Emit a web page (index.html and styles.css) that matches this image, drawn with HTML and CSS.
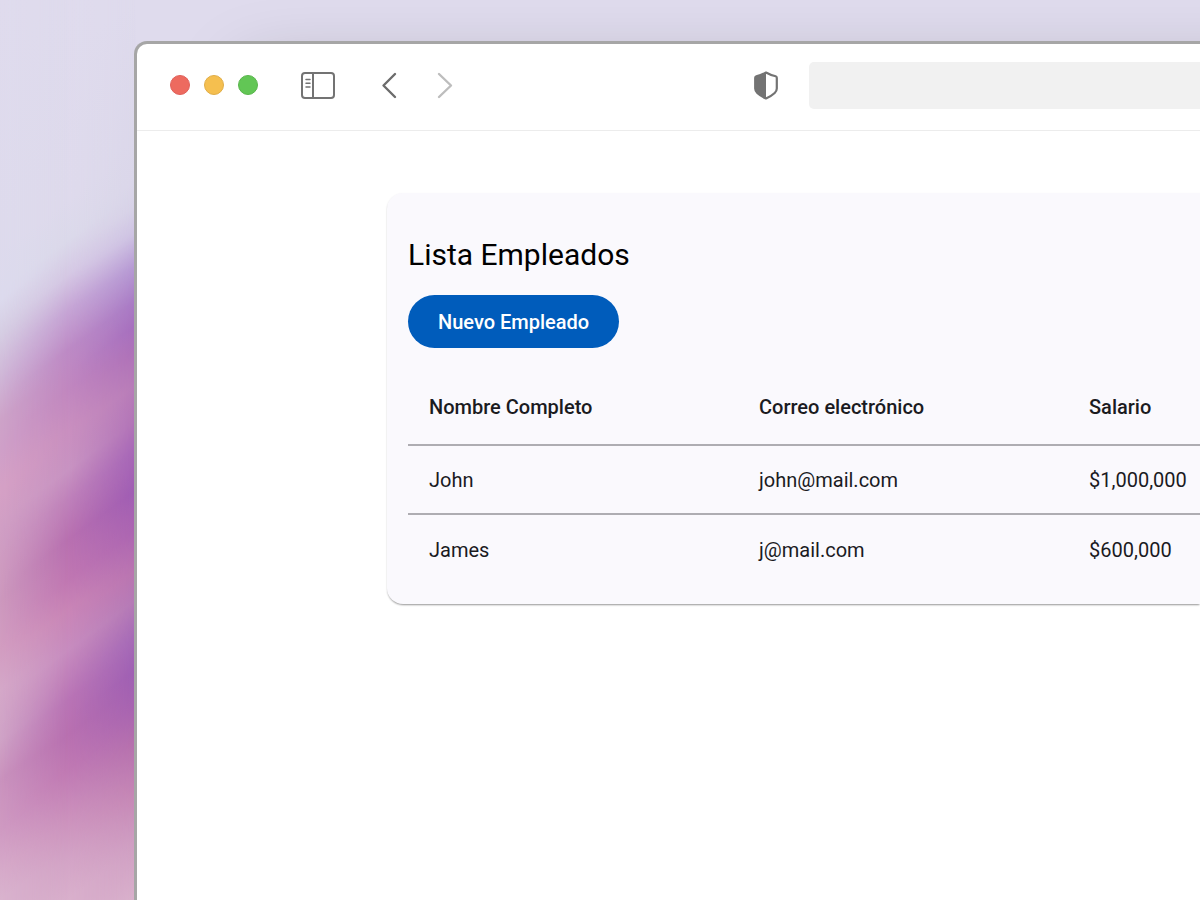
FILE: index.html
```html
<!DOCTYPE html>
<html lang="es">
<head>
<meta charset="utf-8">
<meta name="viewport" content="width=device-width, initial-scale=1">
<title>Lista Empleados</title>
<link rel="stylesheet" href="styles.css">
</head>
<body>
<div class="wallpaper" aria-hidden="true">
  <div class="wash wash-right"></div>
  <div class="wash wash-middle"></div>
  <div class="wash wash-left"></div>
</div>
<div class="window">
  <header class="toolbar">
    <div class="nav">
      <div class="lights">
        <span class="light red"></span>
        <span class="light yellow"></span>
        <span class="light green"></span>
      </div>
      <button class="icon-button" type="button" aria-label="Barra lateral">
        <svg width="34" height="27" viewBox="0 0 34 27" fill="none" stroke="#737373" stroke-width="2">
          <rect x="1" y="1" width="32" height="25" rx="3"/>
          <path d="M12 1v25"/>
          <path d="M5 7.500h4M5 11.200h4M5 14.900h4" stroke-width="1.500" stroke-linecap="round"/>
        </svg>
      </button>
      <div class="arrows">
        <button class="icon-button" type="button" aria-label="Atrás">
          <svg width="16" height="27" viewBox="0 0 16 27" fill="none" stroke="#6c6c6c" stroke-width="2.400" stroke-linecap="round" stroke-linejoin="round"><path d="M14 2L2.500 13.500L14 25"/></svg>
        </button>
        <button class="icon-button" type="button" aria-label="Adelante">
          <svg width="16" height="27" viewBox="0 0 16 27" fill="none" stroke="#bdbdbd" stroke-width="2.400" stroke-linecap="round" stroke-linejoin="round"><path d="M2 2L14 13.500L2 25"/></svg>
        </button>
      </div>
    </div>
    <div class="location">
      <svg width="24" height="29" viewBox="0 0 24 29">
        <path d="M12 1.500C8.500 3.500 5 4.700 2.300 5.300Q1.200 5.600 1.200 6.800V17.500Q1.200 20 3.300 22C6 24.500 9 26.200 12 27.500C15 26.200 18 24.500 20.700 22Q22.800 20 22.800 17.500V6.800Q22.800 5.600 21.700 5.300C19 4.700 15.500 3.500 12 1.500Z" fill="#fff" stroke="#737373" stroke-width="2.200" stroke-linejoin="round"/>
        <path d="M12 1.500C8.500 3.500 5 4.700 2.300 5.300Q1.200 5.600 1.200 6.800V17.500Q1.200 20 3.300 22C6 24.500 9 26.200 12 27.500Z" fill="#737373"/>
      </svg>
      <input class="address" type="text" aria-label="Dirección">
    </div>
  </header>
  <main class="page">
    <section class="card">
      <h1 class="title">Lista Empleados</h1>
      <button class="primary" type="button">Nuevo Empleado</button>
      <table class="employees">
        <thead>
          <tr><th class="name" scope="col">Nombre Completo</th><th class="mail" scope="col">Correo electrónico</th><th scope="col">Salario</th></tr>
        </thead>
        <tbody>
          <tr><td>John</td><td>john@mail.com</td><td>$1,000,000</td></tr>
          <tr><td>James</td><td>j@mail.com</td><td>$600,000</td></tr>
        </tbody>
      </table>
    </section>
  </main>
</div>
</body>
</html>
```

FILE: styles.css
```css
* {
  box-sizing: border-box;
}

body {
  margin: 0;
  min-height: 100vh;
  display: flex;
  padding: 41px 0 0 134px;
  background: #dfdbed;
  font-family: Roboto, "Liberation Sans", sans-serif;
  font-size: 20px;
  color: #1b1b1f;
  overflow: hidden;
}

.wallpaper {
  position: absolute;
  inset: 0 auto 0 0;
  width: 136px;
  overflow: hidden;
}

.wash {
  position: absolute;
  inset: 0 0 -120px;
  transform: skewY(-36deg);
}

.wash-right {
  transform-origin: right;
  background: linear-gradient(#dfdbed 0, #dbd7ea 180px, #d8d3e8 205px, #cfc4e4 232px, #b79bd5 265px, #a97cc6 300px, #a66fbf 325px, #ae71b9 350px, #b87cb9 385px, #b274b8 420px, #a767b8 450px, #a05db4 490px, #ac65b2 530px, #ba74b1 570px, #b57ab6 600px, #a66bb8 635px, #9f5fb4 670px, #a763b1 705px, #b56fae 740px, #c585b5 790px, #cf9dc2 840px, #dab2cd 900px);
}

.wash-middle {
  background: linear-gradient(#dfdbed 0, #dedaec 200px, #dbd9ea 240px, #d5c8e4 275px, #c6a5d5 310px, #bd8ac5 350px, #c187bf 390px, #c98fbf 430px, #c893c2 470px, #bf81ba 500px, #b870b0 540px, #c077b2 580px, #c985b6 610px, #c78cbf 650px, #b974b5 700px, #b870b0 735px, #c079b3 770px, #cc92bd 820px, #d3a4c6 860px, #d9b0cc 900px);
  mask-image: linear-gradient(to right, #000 50%, transparent 100%);
}

.wash-left {
  transform-origin: left;
  background: linear-gradient(#dfdbed 0, #dddaec 230px, #dcdaed 300px, #d5cde2 335px, #cfb5d6 380px, #cda3c8 420px, #cfa0c8 450px, #d5a1c5 490px, #d09fc4 530px, #cc98bd 600px, #d29dc1 650px, #d4a8c8 690px, #cfa3c6 740px, #c992bd 780px, #cf9ac2 830px, #d6aac9 870px, #d9b3ce 900px);
  mask-image: linear-gradient(to right, #000 0%, transparent 50%);
}

.window {
  position: relative;
  flex: 1;
  min-width: 0;
  display: flex;
  flex-direction: column;
  background: #fff;
  border: solid #a6a6a6;
  border-width: 3px 0 0 3px;
  border-top-left-radius: 13px;
  box-shadow: 110px 30px 70px rgba(0, 0, 0, 0.25);
}

.toolbar {
  display: grid;
  grid-template-columns: minmax(300px, 583px) 1fr;
  align-items: center;
  height: 87px;
  padding: 0 0 4px 33px;
  border-bottom: 1px solid #ececec;
}

.nav {
  display: flex;
  align-items: center;
  gap: 43px;
}

.lights {
  display: flex;
  gap: 14px;
}

.light {
  width: 20px;
  height: 20px;
  border: 1px solid;
  border-radius: 50%;
}

.red {
  background: #ed6a5f;
  border-color: #e0605a;
}

.yellow {
  background: #f5bf4f;
  border-color: #e0ad47;
}

.green {
  background: #62c655;
  border-color: #59b64c;
}

.arrows {
  display: flex;
  gap: 40px;
  padding-left: 3px;
}

.icon-button {
  display: flex;
  padding: 0;
  border: 0;
  background: none;
}

.location {
  display: grid;
  grid-template-columns: 24px 1fr;
  align-items: center;
  gap: 31px;
  padding-left: 1px;
}

.address {
  width: 100%;
  min-width: 0;
  height: 47px;
  border: 0;
  border-radius: 5px 0 0 5px;
  background: #f1f1f1;
  font: inherit;
}

.page {
  padding: 62px 0 62px 250px;
}

.card {
  padding: 42px 0 20px 21px;
  border-radius: 16px 0 0 16px;
  background: #faf9fd;
  box-shadow: 0 2px 2px -1px rgba(0, 0, 0, 0.3), 0 1px 2px rgba(0, 0, 0, 0.14);
}

.title {
  margin: 0 0 20px;
  font-size: 30px;
  font-weight: 400;
  line-height: 40px;
  color: #000;
}

.primary {
  display: block;
  height: 53px;
  padding: 0 30px;
  border: 0;
  border-radius: 27px;
  background: #005cbb;
  color: #fff;
  font: inherit;
  font-weight: 500;
}

.employees {
  width: 100%;
  margin-top: 21px;
  border-collapse: separate;
  border-spacing: 0;
  table-layout: fixed;
}

.employees th,
.employees td {
  height: 69px;
  padding: 0 0 0 21px;
  text-align: left;
  font-weight: 400;
}

.employees th {
  height: 77px;
  font-weight: 500;
}

.employees th,
.employees tr:not(:last-child) td {
  border-bottom: 2px solid #aeadb2;
}

.employees .name,
.employees .mail {
  width: 330px;
}

@media (max-width: 1100px) {
  .page {
    padding-left: 21px;
  }

  .employees .name,
  .employees .mail {
    width: 36%;
  }
}
```
